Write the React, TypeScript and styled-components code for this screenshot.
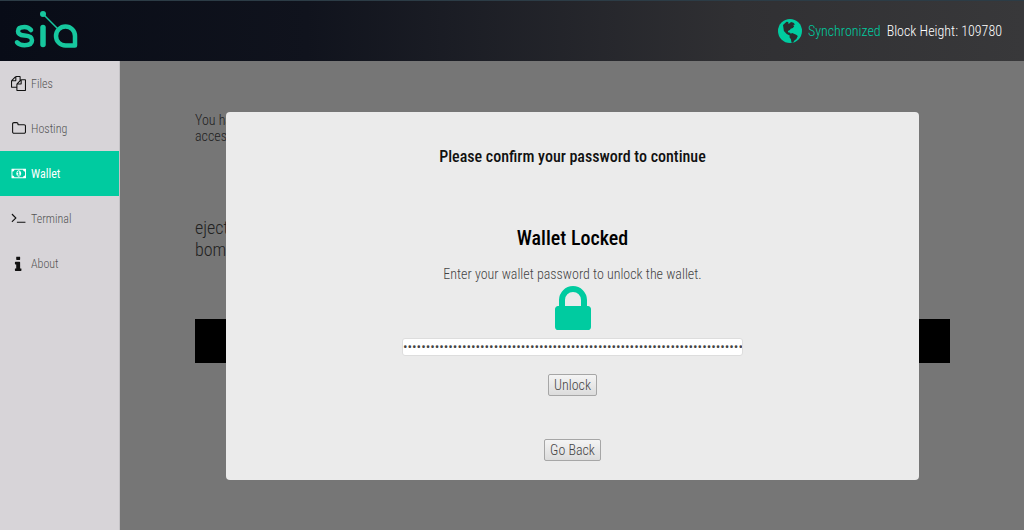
import React from "react";
import styled, { createGlobalStyle } from "styled-components";

const GREEN = "#00cba0";

const GlobalStyle = createGlobalStyle`
  *, *::before, *::after { box-sizing: border-box; }
  body {
    margin: 0;
    background: #ececec;
    color: #444;
    font-family: "Roboto Condensed", "Liberation Sans Narrow", Roboto, sans-serif;
    font-size: 14px;
    font-weight: 300;
  }
  button, input { font: inherit; color: inherit; }
  h1, h2, p { margin: 0; }
`;

const Page = styled.div`
  display: flex;
  flex-direction: column;
  min-height: 100vh;
`;

const Header = styled.header`
  display: flex;
  align-items: center;
  justify-content: space-between;
  height: 61px;
  padding: 0 22px 0 13px;
  border-top: 1px solid #2c3c46;
  background: linear-gradient(90deg, #080c17 0%, #10131d 30%, #303033 72%, #38383a 100%);
`;

const Logo = styled.svg`
  display: block;
  width: 66px;
  height: 42px;
`;

const Status = styled.div`
  display: flex;
  align-items: center;
  gap: 6px;
  font-size: 14px;
  color: ${GREEN};
`;

const BlockHeight = styled.span`
  color: #fff;
`;

const Icon = styled.svg<{ $size: number }>`
  display: block;
  flex: none;
  width: ${(p) => p.$size}px;
  height: ${(p) => p.$size}px;
  fill: currentColor;
`;

const Body = styled.div`
  display: flex;
  flex: 1;
`;

const Nav = styled.nav`
  flex: none;
  width: 120px;
  background: #d7d4d8;
  border-right: 1px solid #c4c2c6;
`;

const NavLink = styled.a<{ $active?: boolean }>`
  display: flex;
  align-items: center;
  gap: 5px;
  height: 45px;
  padding-left: 11px;
  font-size: 12px;
  text-decoration: none;
  color: ${(p) => (p.$active ? "#fff" : "#555")};
  font-weight: ${(p) => (p.$active ? 400 : 300)};
  background: ${(p) => (p.$active ? GREEN : "transparent")};
  svg { color: ${(p) => (p.$active ? "#fff" : "#111")}; }
`;

const Main = styled.main`
  display: grid;
  flex: 1;
  min-width: 0;
  > * { grid-area: 1 / 1; }
`;

const Content = styled.section`
  display: flex;
  flex-direction: column;
  padding: 51px 74px 0 75px;
`;

const Notice = styled.p`
  height: 105px;
  font-size: 14px;
  line-height: 16px;
`;

const Seed = styled.p`
  height: 102px;
  font-size: 18px;
  line-height: 22px;
`;

const Bar = styled.div`
  height: 44px;
  background: #000;
`;

const Backdrop = styled.div`
  z-index: 1;
  padding: 51px 105px 50px 106px;
  background: rgba(0, 0, 0, 0.5);
`;

const Dialog = styled.form`
  display: flex;
  flex-direction: column;
  align-items: center;
  min-height: 368px;
  padding-top: 35px;
  border-radius: 4px;
  background: #ebebeb;
`;

const Prompt = styled.h1`
  font-size: 16px;
  line-height: 20px;
  font-weight: 500;
  color: #111;
`;

const Title = styled.h2`
  margin-top: 58px;
  font-size: 20px;
  line-height: 26px;
  font-weight: 500;
  color: #000;
`;

const Hint = styled.label`
  margin-top: 15px;
  font-size: 14px;
  line-height: 16px;
`;

const Password = styled.input`
  width: 341px;
  height: 18px;
  padding: 0;
  border: 1px solid #ddd;
  border-radius: 3px;
  background: #fff;
  font-size: 14px;
  outline: none;
`;

const Button = styled.button`
  height: 22px;
  padding: 0 5px;
  border: 1px solid #a6a6a6;
  border-radius: 2px;
  background: linear-gradient(#f4f4f4, #dcdcdc);
  font-size: 14px;
  line-height: 20px;
`;

const Unlock = styled(Button)` margin-top: 18px; `;
const GoBack = styled(Button)` margin-top: 43px; `;

const icons = {
  files: "M1696 384q40 0 68 28t28 68v1216q0 40-28 68t-68 28h-960q-40 0-68-28t-28-68v-288h-544q-40 0-68-28t-28-68v-672q0-40 20-88t48-76l408-408q28-28 76-48t88-20h416q40 0 68 28t28 68v328q68-40 128-40h416zm-544 213l-299 299h299v-299zm-640-384l-299 299h299v-299zm196 647l316-316v-416h-384v416q0 40-28 68t-68 28h-416v640h512v-256q0-40 20-88t48-76zm956 804v-1152h-384v416q0 40-28 68t-68 28h-416v640h896z",
  folder: "M1600 1312v-704q0-40-28-68t-68-28h-704q-40 0-68-28t-28-68v-64q0-40-28-68t-68-28h-320q-40 0-68 28t-28 68v960q0 40 28 68t68 28h1216q40 0 68-28t28-68zm128-704v704q0 92-66 158t-158 66h-1216q-92 0-158-66t-66-158v-960q0-92 66-158t158-66h320q92 0 158 66t66 158v32h672q92 0 158 66t66 158z",
  money: "M768 1152h384v-96h-128v-448h-114l-148 137 77 80q42-37 55-57h2v288h-128v96zm512-256q0 70-21 142t-59.5 134-101.5 101-138 39-138-39-101.5-101-59.5-134-21-142 21-142 59.5-134 101.5-101 138-39 138 39 101.5 101 59.5 134 21 142zm512 256v-512q-106 0-181-75t-75-181h-1152q0 106-75 181t-181 75v512q106 0 181 75t75 181h1152q0-106 75-181t181-75zm128-832v1152q0 26-19 45t-45 19h-1792q-26 0-45-19t-19-45v-1152q0-26 19-45t45-19h1792q26 0 45 19t19 45z",
  terminal: "M649 983l-466 466q-10 10-23 10t-23-10l-50-50q-10-10-10-23t10-23l393-393-393-393q-10-10-10-23t10-23l50-50q10-10 23-10t23 10l466 466q10 10 10 23t-10 23zm1079 457v64q0 14-9 23t-23 9h-960q-14 0-23-9t-9-23v-64q0-14 9-23t23-9h960q14 0 23 9t9 23z",
  info: "M1216 1344v128q0 26-19 45t-45 19h-512q-26 0-45-19t-19-45v-128q0-26 19-45t45-19h64v-384h-64q-26 0-45-19t-19-45v-128q0-26 19-45t45-19h384q26 0 45 19t19 45v576h64q26 0 45 19t19 45zm-128-1152v192q0 26-19 45t-45 19h-256q-26 0-45-19t-19-45v-192q0-26 19-45t45-19h256q26 0 45 19t19 45z",
};

const viewBoxes: Record<keyof typeof icons, string> = {
  files: "0 0 1792 1792",
  folder: "-64 0 1792 1792",
  money: "-64 0 1984 1792",
  terminal: "0 128 1792 1792",
  info: "192 64 1472 1472",
};

const LOCK =
  "M640 768h512v-192q0-106-75-181t-181-75-181 75-75 181v192zm832 96v576q0 40-28 68t-68 28h-960q-40 0-68-28t-28-68v-576q0-40 28-68t68-28h32v-192q0-184 132-316t316-132 316 132 132 316v192h32q40 0 68 28t28 68z";

const navItems: { label: string; icon: keyof typeof icons; active?: boolean }[] = [
  { label: "Files", icon: "files" },
  { label: "Hosting", icon: "folder" },
  { label: "Wallet", icon: "money", active: true },
  { label: "Terminal", icon: "terminal" },
  { label: "About", icon: "info" },
];

export default function App() {
  return (
    <Page>
      <GlobalStyle />
      <Header>
        <Logo viewBox="0 0 66 42" role="img" aria-label="Sia">
          <g fill="none" stroke="#16c79e" strokeLinecap="round" strokeLinejoin="round">
            <path strokeWidth="4.500" d="M18 20q-2.500-3-6.500-3-6.500 0-6.500 4.200 0 3.800 6.500 4.300 7.500.5 7.500 4.800 0 5-7.500 5-5 0-7.500-3" />
            <path strokeWidth="5.500" d="M30 17.500v17" />
            <path strokeWidth="4.500" d="M52.500 16.500a9.500 9.500 0 1 0 0 19h9.500v-9.500a9.500 9.500 0 0 0-9.500-9.500z" />
            <path strokeWidth="1.500" d="M30 4l14 14" />
          </g>
          <circle cx="30" cy="4" r="3" fill="#16c79e" />
        </Logo>
        <Status>
          <Icon $size={24} viewBox="0 0 24 24" aria-hidden="true">
            <circle cx="12" cy="12" r="12" />
            <path
              fill="#2b2b2e"
              d="M5 6l3.500-3.200 2 .2-.6 1.400 1.500.2 1.600-1.600 2.500.7 1.500 1.800-1.800.6 1 1.200-1.300 1.600-2.200.8-.8 1.400-2 1 .2 1.200 2 .4.600 1 1.500-.6 4 1.600 1.600 1.400-1.400 2.800-2 1.600-1.400 2.200-1.500-.3-.6-3.200-1.400-2 .2-1.700-3-1.400-2.800-3z"
            />
          </Icon>
          <span>Synchronized</span>
          <BlockHeight>Block Height: 109780</BlockHeight>
        </Status>
      </Header>
      <Body>
        <Nav>
          {navItems.map((item) => (
            <NavLink key={item.label} href="#" $active={item.active}>
              <Icon $size={15} viewBox={viewBoxes[item.icon]} aria-hidden="true">
                <path d={icons[item.icon]} />
              </Icon>
              {item.label}
            </NavLink>
          ))}
        </Nav>
        <Main>
          <Content>
            <Notice>You ha<br />access</Notice>
            <Seed>eject<br />bom</Seed>
            <Bar />
          </Content>
          <Backdrop>
            <Dialog onSubmit={(e) => e.preventDefault()}>
              <Prompt>Please confirm your password to continue</Prompt>
              <Title>Wallet Locked</Title>
              <Hint htmlFor="password">Enter your wallet password to unlock the wallet.</Hint>
              <Icon $size={56} viewBox="0 0 1792 1792" color={GREEN} aria-hidden="true">
                <path d={LOCK} />
              </Icon>
              <Password id="password" type="password" defaultValue={"x".repeat(90)} />
              <Unlock type="submit">Unlock</Unlock>
              <GoBack type="button">Go Back</GoBack>
            </Dialog>
          </Backdrop>
        </Main>
      </Body>
    </Page>
  );
}
